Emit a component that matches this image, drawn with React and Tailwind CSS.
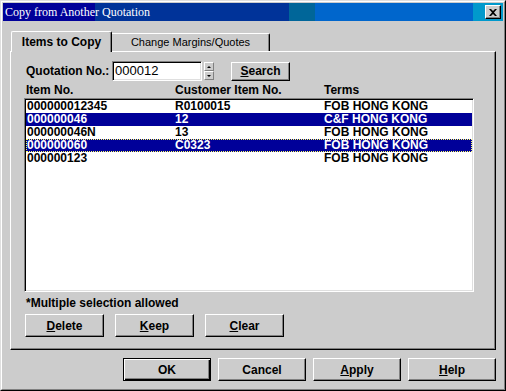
import React from "react";

const rows = [
  { item: "000000012345", cust: "R0100015", terms: "FOB HONG KONG" },
  { item: "000000046", cust: "12", terms: "C&F HONG KONG", sel: true },
  { item: "000000046N", cust: "13", terms: "FOB HONG KONG" },
  { item: "000000060", cust: "C0323", terms: "FOB HONG KONG", sel: true, focus: true },
  { item: "000000123", cust: "", terms: "FOB HONG KONG" },
];

// classic raised 3D button
function Btn({ className = "", children, def = false }) {
  if (def) {
    return (
      <div className={`flex items-center justify-center border border-black bg-[#cccccc] shadow-[inset_1px_1px_0_#ffffff,inset_-1px_-1px_0_#000000,inset_-2px_-2px_0_#808080] ${className}`}>
        {children}
      </div>
    );
  }
  return (
    <div className={`flex items-center justify-center border border-t-white border-l-white border-r-black border-b-black bg-[#cccccc] shadow-[inset_-1px_-1px_0_#808080] ${className}`}>
      {children}
    </div>
  );
}

function Row({ r }) {
  const base = r.sel ? "bg-[#000099] text-white" : "text-black";
  const focus = r.focus ? "outline outline-1 outline-dotted outline-offset-[-1px] outline-[#ffff66]" : "";
  return (
    <div className={`flex h-[13px] leading-[13px] ${base} ${focus}`}>
      <div className="w-[149px] pl-[1px]">{r.item}</div>
      <div className="w-[149px]">{r.cust}</div>
      <div className="flex-1">{r.terms}</div>
    </div>
  );
}

export default function App() {
  return (
    <div className="w-[506px] h-[391px] bg-[#cccccc] border border-t-[#dfdfdf] border-l-[#dfdfdf] border-r-black border-b-black font-['Liberation_Sans',Arial,sans-serif] text-[12px] font-bold text-black">
      <div className="w-full h-full border border-t-white border-l-white border-r-[#808080] border-b-[#808080] p-px">
        {/* Title bar */}
        <div className="h-[18px] flex items-center justify-between bg-[linear-gradient(to_right,#000099_92px,#003399_92px,#003399_286px,#006699_286px,#006699_312px,#0066cc_312px,#0066cc_470px,#0099cc_470px)]">
          <span className="pl-[2px] font-['Liberation_Serif',serif] font-normal text-[12px] text-white leading-none">
            Copy from Another Quotation
          </span>
          <div className="mr-[2px] w-[16px] h-[14px] flex items-center justify-center bg-[#cccccc] border border-t-white border-l-white border-r-black border-b-black shadow-[inset_-1px_-1px_0_#808080]">
            <svg width="8" height="7" viewBox="0 0 8 7">
              <path d="M0 0h2l2 2 2-2h2L5 3.5 8 7H6L4 5 2 7H0l3-3.5z" fill="#000" />
            </svg>
          </div>
        </div>

        {/* Tabs */}
        <div className="mt-[10px] ml-[8px] h-[20px] flex items-end">
          <div className="relative z-10 -mb-px w-[101px] h-[21px] bg-[#cccccc] border-t border-l border-r border-t-white border-l-white border-r-black rounded-t-[2px] shadow-[inset_-1px_0_0_#808080] flex justify-center pt-[4px]">
            <span className="text-[12px] leading-[13px]">Items to Copy</span>
          </div>
          <div className="w-[158px] h-[18px] border-t border-r border-t-white border-r-black rounded-tr-[2px] shadow-[inset_-1px_0_0_#808080] flex justify-center pt-[2px]">
            <span className="font-normal text-[11px] leading-[13px]">Change Margins/Quotes</span>
          </div>
        </div>

        {/* Panel */}
        <div className="ml-[7px] w-[486px] h-[299px] border border-t-white border-l-white border-r-black border-b-black shadow-[inset_-1px_-1px_0_#808080] pl-[13px] pt-[9px]">
          <div className="flex items-center h-[20px]">
            <span className="ml-[2px] w-[86px] leading-[13px]">Quotation No.:</span>
            <div className="w-[90px] h-[20px] bg-white border border-t-[#808080] border-l-[#808080] border-r-white border-b-white shadow-[inset_1px_1px_0_#000000,inset_-1px_-1px_0_#dfdfdf] pl-[2px] flex items-center font-normal text-[13px]">
              000012
            </div>
            <div className="ml-[2px] w-[10px] h-[18px] flex flex-col">
              <div className="h-[9px] flex items-center justify-center border border-t-white border-l-white border-r-[#808080] border-b-[#808080] bg-[#cccccc]">
                <svg width="4" height="2" viewBox="0 0 4 2"><path d="M2 0 4 2H0z" fill="#000" /></svg>
              </div>
              <div className="h-[9px] flex items-center justify-center border border-t-white border-l-white border-r-[#808080] border-b-[#808080] bg-[#cccccc]">
                <svg width="4" height="2" viewBox="0 0 4 2"><path d="M0 0h4L2 2z" fill="#000" /></svg>
              </div>
            </div>
            <Btn className="ml-[17px] w-[59px] h-[19px]">
              <span><span className="underline">S</span>earch</span>
            </Btn>
          </div>

          <div className="h-[17px] flex items-end pb-[1px] leading-[13px]">
            <div className="ml-[2px] w-[149px]">Item No.</div>
            <div className="w-[149px]">Customer Item No.</div>
            <div>Terms</div>
          </div>

          <div className="w-[450px] h-[194px] bg-white border border-t-[#808080] border-l-[#808080] border-r-white border-b-white shadow-[inset_1px_1px_0_#000000,inset_-1px_-1px_0_#dfdfdf] p-px">
            {rows.map((r) => (
              <Row key={r.item} r={r} />
            ))}
          </div>

          <div className="ml-[2px] mt-[5px] h-[13px] leading-[13px]">*Multiple selection allowed</div>

          <div className="mt-[4px] ml-[1px] flex gap-[11px]">
            <Btn className="w-[79px] h-[23px]"><span><span className="underline">D</span>elete</span></Btn>
            <Btn className="w-[79px] h-[23px]"><span><span className="underline">K</span>eep</span></Btn>
            <Btn className="w-[79px] h-[23px]"><span><span className="underline">C</span>lear</span></Btn>
          </div>
        </div>

        {/* Bottom buttons */}
        <div className="mt-[8px] ml-[120px] flex gap-[7px]">
          <Btn def className="w-[88px] h-[23px]">OK</Btn>
          <Btn className="w-[88px] h-[23px]">Cancel</Btn>
          <Btn className="w-[88px] h-[23px]"><span><span className="underline">A</span>pply</span></Btn>
          <Btn className="w-[88px] h-[23px]"><span><span className="underline">H</span>elp</span></Btn>
        </div>
      </div>
    </div>
  );
}
